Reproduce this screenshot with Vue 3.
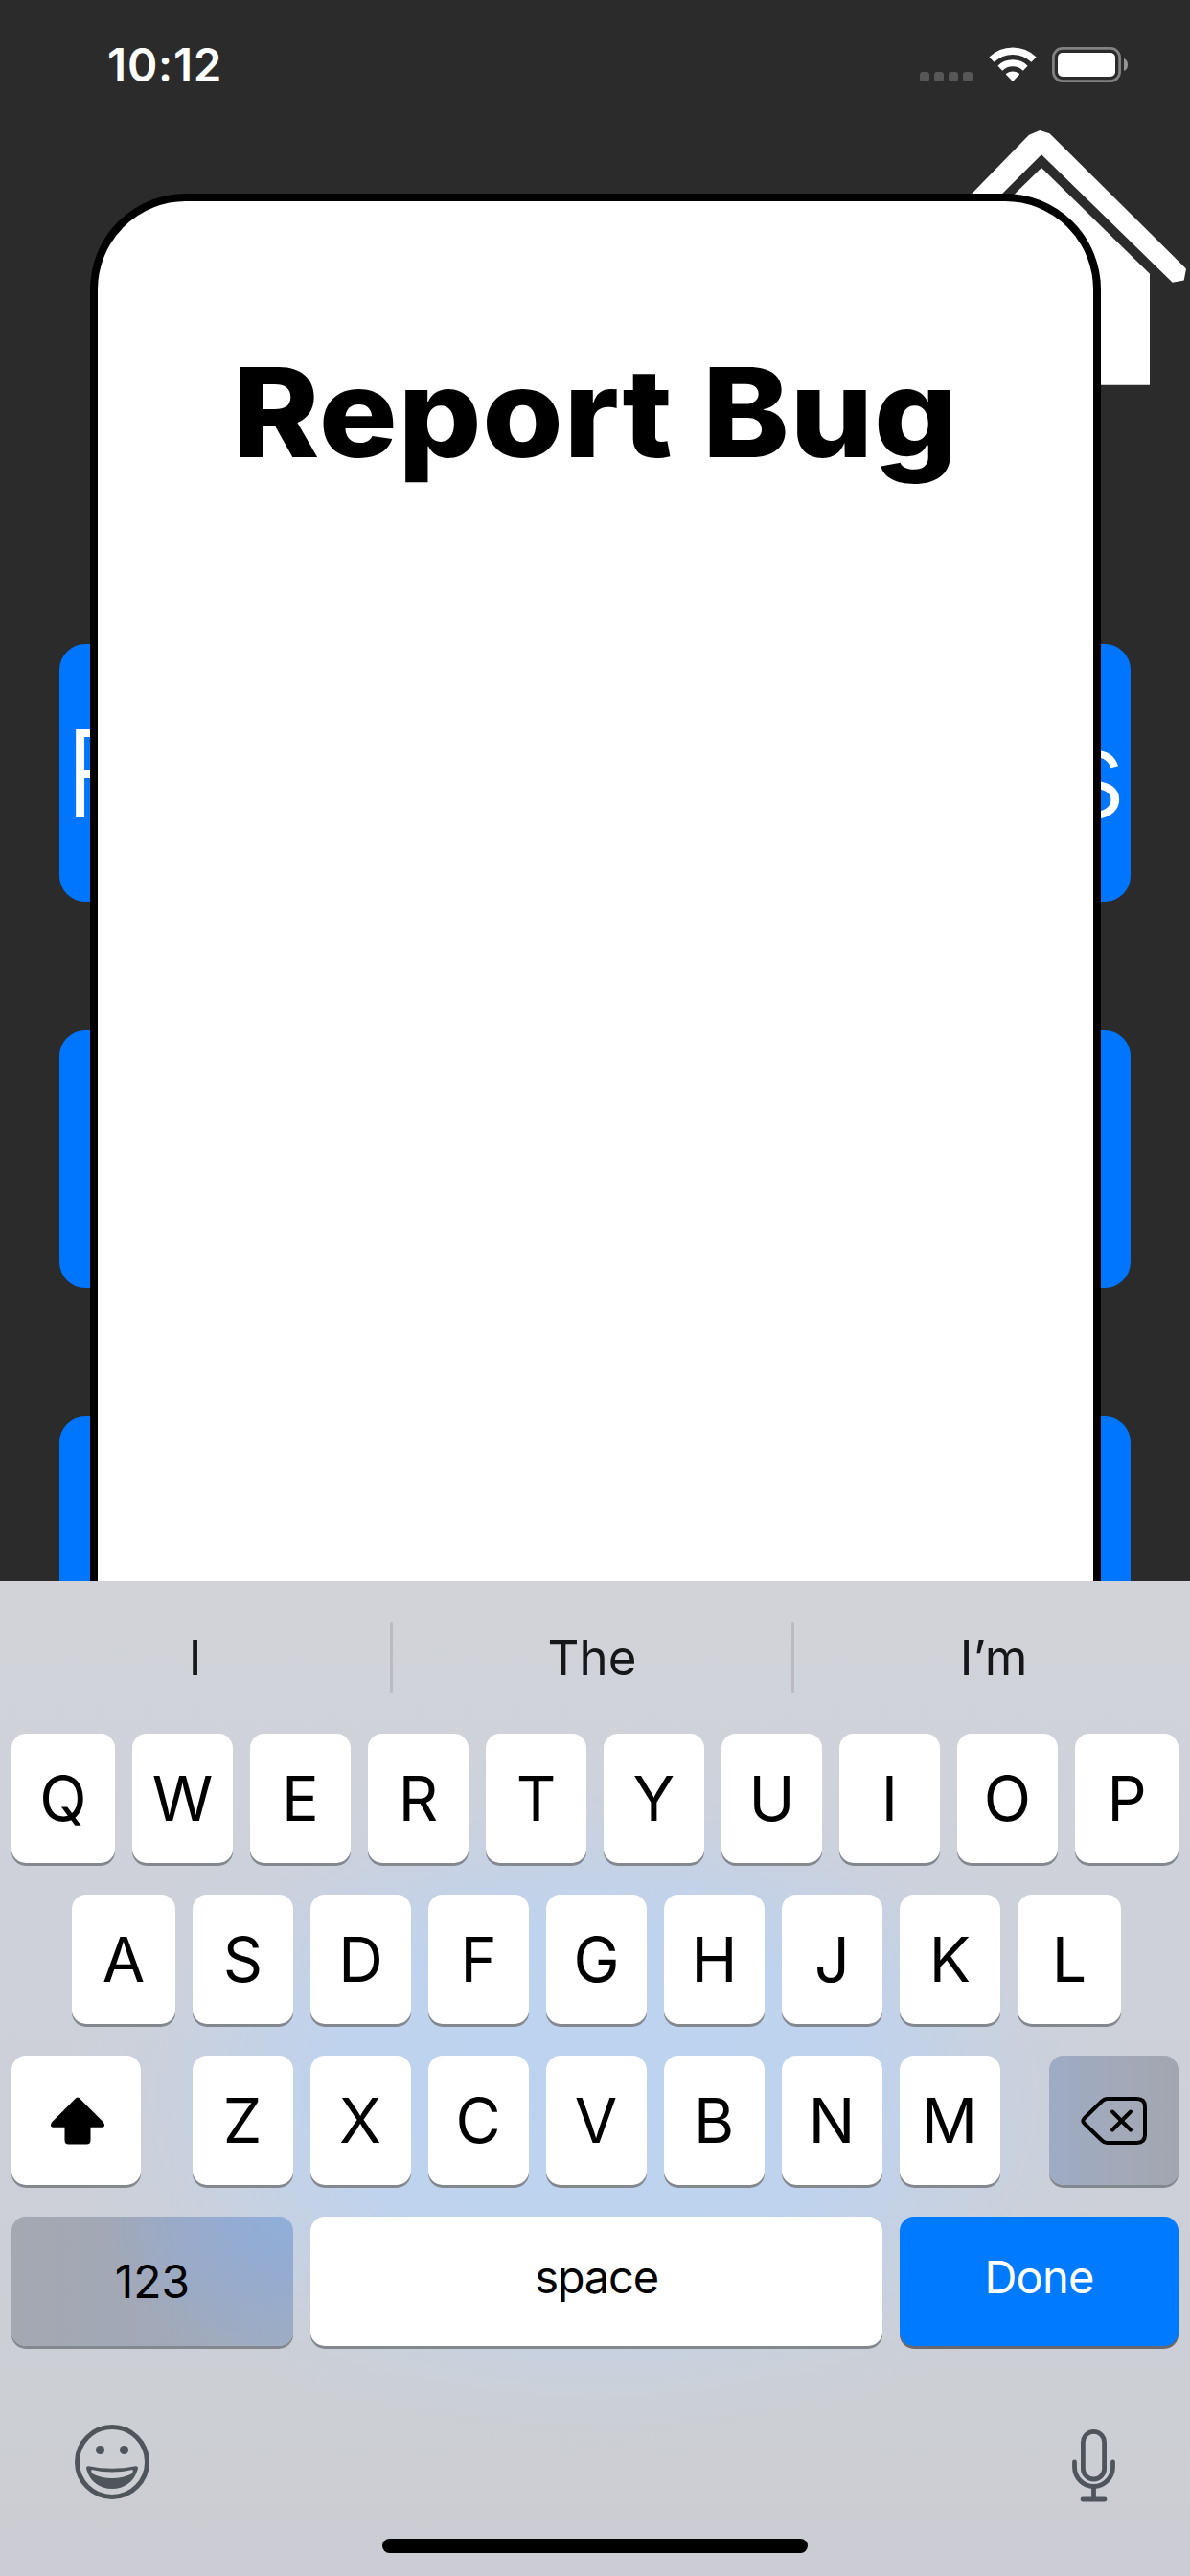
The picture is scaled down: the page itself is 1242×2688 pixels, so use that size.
<script setup>
const topRow = [...'QWERTYUIOP']
const homeRow = [...'ASDFGHJKL']
const bottomRow = [...'ZXCVBNM']
</script>

<template>
  <div class="screen">
    <header class="status">
      <span class="time">10:12</span>
      <div class="indicators">
        <div class="dots"><i v-for="n in 4" :key="n"></i></div>
        <svg class="wifi" width="50" height="37" viewBox="0 0 50 37">
          <g fill="none" stroke="#fff">
            <path d="M3 13.2A31.5 31.5 0 0 1 47 13.2" stroke-width="7.4" />
            <path d="M11.8 22.2A19 19 0 0 1 38.2 22.2" stroke-width="7" />
          </g>
          <path d="M25 36L18 28.8Q17.600 28.300 18.200 27.800Q25 23 31.800 27.800Q32.400 28.300 32 28.800Z" fill="#fff" />
        </svg>
        <svg class="battery" width="79" height="37" viewBox="0 0 79 37">
          <rect x="1.400" y="1.400" width="69.200" height="34.200" rx="9.500" fill="none" stroke="#828282" stroke-width="2.700" />
          <rect x="6" y="6" width="60" height="25" rx="5" fill="#fff" />
          <path d="M75 12Q79 13.500 79 18.500Q79 23.500 75 25Z" fill="#959595" />
        </svg>
      </div>
    </header>

    <div class="nav">
      <svg class="home" width="304" height="268" viewBox="934 135 304 268" fill="#fff">
        <path d="M1085.300 136L1095.500 139.300L1238 280.500L1235.700 292.400L1223.700 294.700L1087 161.300L953 294.700L941 292.400L938 280.500L1074 140.700Z" />
        <path d="M1087 175L1200 285.700V401.700H974V285.700Z" />
      </svg>
    </div>

    <main class="menu">
      <div class="option"><span>F</span><span>s</span></div>
      <div class="option"></div>
      <div class="option"></div>
    </main>

    <section class="modal">
      <h1>Report Bug</h1>
    </section>

    <section class="keyboard">
      <div class="suggestions">
        <span>I</span><b></b><span>The</span><b></b><span>I’m</span>
      </div>
      <div class="row">
        <button v-for="k in topRow" :key="k" class="key letter"><span>{{ k }}</span></button>
      </div>
      <div class="row middle">
        <button v-for="k in homeRow" :key="k" class="key letter"><span>{{ k }}</span></button>
      </div>
      <div class="row spread">
        <button class="key side">
          <svg width="58" height="50" viewBox="0 0 58 50">
            <path d="M27.500 1Q29 0 30.500 1L56 26.500Q58.500 31 55 31.800H42.500V45.500Q42.500 49.500 38.500 49.500H19.500Q15.500 49.500 15.500 45.500V31.800H3Q-.5 31 2 26.500Z" />
          </svg>
        </button>
        <div class="group">
          <button v-for="k in bottomRow" :key="k" class="key"><span>{{ k }}</span></button>
        </div>
        <button class="key side delete">
          <svg width="70" height="50" viewBox="0 0 70 50" fill="none" stroke="#000" stroke-width="4" stroke-linecap="round" stroke-linejoin="round">
            <path d="M27.500 2.100H58.500Q67 2.100 67 10.500V39.500Q67 47.900 58.500 47.900H27.500Q24.500 47.900 22 45.500L3.500 27.500Q1.200 25 3.500 22.500L22 4.500Q24.500 2.100 27.500 2.100Z" />
            <path d="M33 15.500L52 34.500M52 15.500L33 34.500" />
          </svg>
        </button>
      </div>
      <div class="row">
        <button class="key numbers"><span>123</span></button>
        <button class="key space"><span>space</span></button>
        <button class="key done"><span>Done</span></button>
      </div>
      <footer class="tools">
        <svg width="78" height="78" viewBox="0 0 78 78">
          <circle cx="39" cy="39" r="36.500" fill="none" stroke="#50555c" stroke-width="5" />
          <circle cx="26.500" cy="26.500" r="4.600" fill="#50555c" />
          <circle cx="51.500" cy="26.500" r="4.600" fill="#50555c" />
          <path fill="#50555c" fill-rule="evenodd" d="M14.500 43.200Q39 48.500 63.500 43.200Q66.500 43 65.800 46.500C62 60 51.500 67 39 67S16 60 12.200 46.500Q11.500 43 14.500 43.200ZM17.500 47Q16.500 49.500 18.500 51.300Q27 56 39 56T59.500 51.300Q61.500 49.500 60.500 47Q39 52 17.500 47Z" />
        </svg>
        <svg class="mic" width="46" height="76" viewBox="0 0 46 76" fill="none" stroke="#50555c" stroke-width="4.800" stroke-linecap="round">
          <rect x="11.400" y="2.400" width="22.200" height="49.600" rx="11.100" />
          <path d="M2.500 34V39A20 20.500 0 0 0 42.500 39V34M22.500 60V71M11 73H34" />
        </svg>
      </footer>
      <div class="indicator"></div>
    </section>
  </div>
</template>

<style>
body { margin: 0; background: #2b2b2b; }
</style>

<style scoped>
.screen {
  position: relative;
  width: 1242px;
  height: 2688px;
  overflow: hidden;
  background: #2b2b2b;
  color: #fff;
  font-family: Inter, "Liberation Sans", sans-serif;
}
.status {
  display: flex;
  justify-content: space-between;
  height: 136px;
  padding: 0 65px 0 112px;
  box-sizing: border-box;
}
.time {
  padding-top: 39px;
  font-size: 47.500px;
  line-height: 58px;
  font-weight: 600;
  letter-spacing: 0.8px;
}
.indicators { display: flex; align-items: flex-start; padding-top: 49px; }
.dots { display: flex; gap: 5px; padding-top: 26px; }
.dots i { width: 10px; height: 10px; border-radius: 3px; background: #575757; }
.wifi { margin-left: 17px; }
.battery { margin-left: 16px; }
.nav { display: flex; justify-content: flex-end; height: 536px; padding-right: 4px; margin-top: -1px; }
.menu { display: flex; flex-direction: column; gap: 134px; padding: 1px 62px 0; }
.option {
  display: flex;
  align-items: center;
  justify-content: space-between;
  height: 269px;
  padding: 0 5px;
  box-sizing: border-box;
  border-radius: 27px;
  background: #0076ff;
  font-size: 127px;
  font-weight: 300;
}
.modal {
  position: absolute;
  top: 202px;
  left: 93.5px;
  width: 1055px;
  height: 1700px;
  box-sizing: border-box;
  border: 8.700px solid #000;
  border-radius: 100px;
  background: #fff;
  color: #000;
}
h1 {
  margin: 142px 0 0;
  font-size: 129px;
  line-height: 156px;
  font-weight: 800;
  letter-spacing: 0.6px;
  text-align: center;
  white-space: nowrap;
  transform: scaleX(1.06);
}
.keyboard {
  position: absolute;
  left: 0;
  bottom: 0;
  width: 1242px;
  height: 1038px;
  box-sizing: border-box;
  padding: 0 12px;
  color: #000;
  background:
    radial-gradient(ellipse 570px 370px at 621px 535px, #bcd3ef 0%, #bfd3ee 48%, rgba(194, 210, 233, .75) 65%, rgba(200, 210, 226, .4) 82%, rgba(205, 209, 216, 0) 100%),
    linear-gradient(#d1d3d8, #cfd2da 20%, #cccfd7 70%, #cccfd3 85%, #cbccd4);
}
.suggestions {
  display: flex;
  align-items: center;
  height: 159px;
  margin: 0 -12px;
  color: #161719;
  font-size: 51px;
}
.suggestions span { width: 408px; text-align: center; }
.suggestions span:nth-of-type(2) { width: 417px; }
.suggestions span:last-child { width: 411px; padding-left: 3px; }
.suggestions b { width: 3px; height: 74px; border-radius: 2px; background: #b9bbc0; }
.row { display: flex; gap: 18px; height: 135px; margin-bottom: 33px; }
.middle { padding: 0 63px; }
.spread { justify-content: space-between; }
.group { display: flex; gap: 18px; padding-left: 2px; }
.key {
  display: flex;
  align-items: center;
  justify-content: center;
  flex: none;
  width: 105px;
  height: 135px;
  margin: 0;
  padding: 0;
  border: 0;
  border-radius: 15px;
  background: #fff;
  box-shadow: 0 3px 0 #83888f;
  color: #000;
  font-family: inherit;
  font-size: 64.500px;
}
.letter:first-child, .letter:last-child { width: 108px; }
.key.side { width: 135px; }
.side:first-child svg { margin-left: 3px; }
.key.delete { background: linear-gradient(90deg, #9dabc4, #a2a9b8 55%, #a2a6b0); }
.key.numbers {
  width: 294px;
  font-size: 48px;
  background: radial-gradient(ellipse 200px 150px at 100% 0, #8fafda, #95abd0 40%, rgba(160, 173, 194, 0)), linear-gradient(90deg, #a3a8b1, #a2a8b6 40%, #9fadc1);
}
.key.space { width: 597px; font-size: 47px; letter-spacing: -1.200px; }
.key.done { width: 291px; font-size: 47px; letter-spacing: -0.8px; background: #007aff; color: #fff; box-shadow: 0 3px 0 #66696f; }
.space span, .done span { padding-bottom: 10px; }
.tools { display: flex; justify-content: space-between; align-items: flex-start; margin-top: 82px; padding: 0 66px; }
.mic { margin: 5px 0 0; margin-right: -1px; }
.indicator { width: 444px; height: 15px; margin: 38px auto 0; border-radius: 8px; background: #000; }
</style>
